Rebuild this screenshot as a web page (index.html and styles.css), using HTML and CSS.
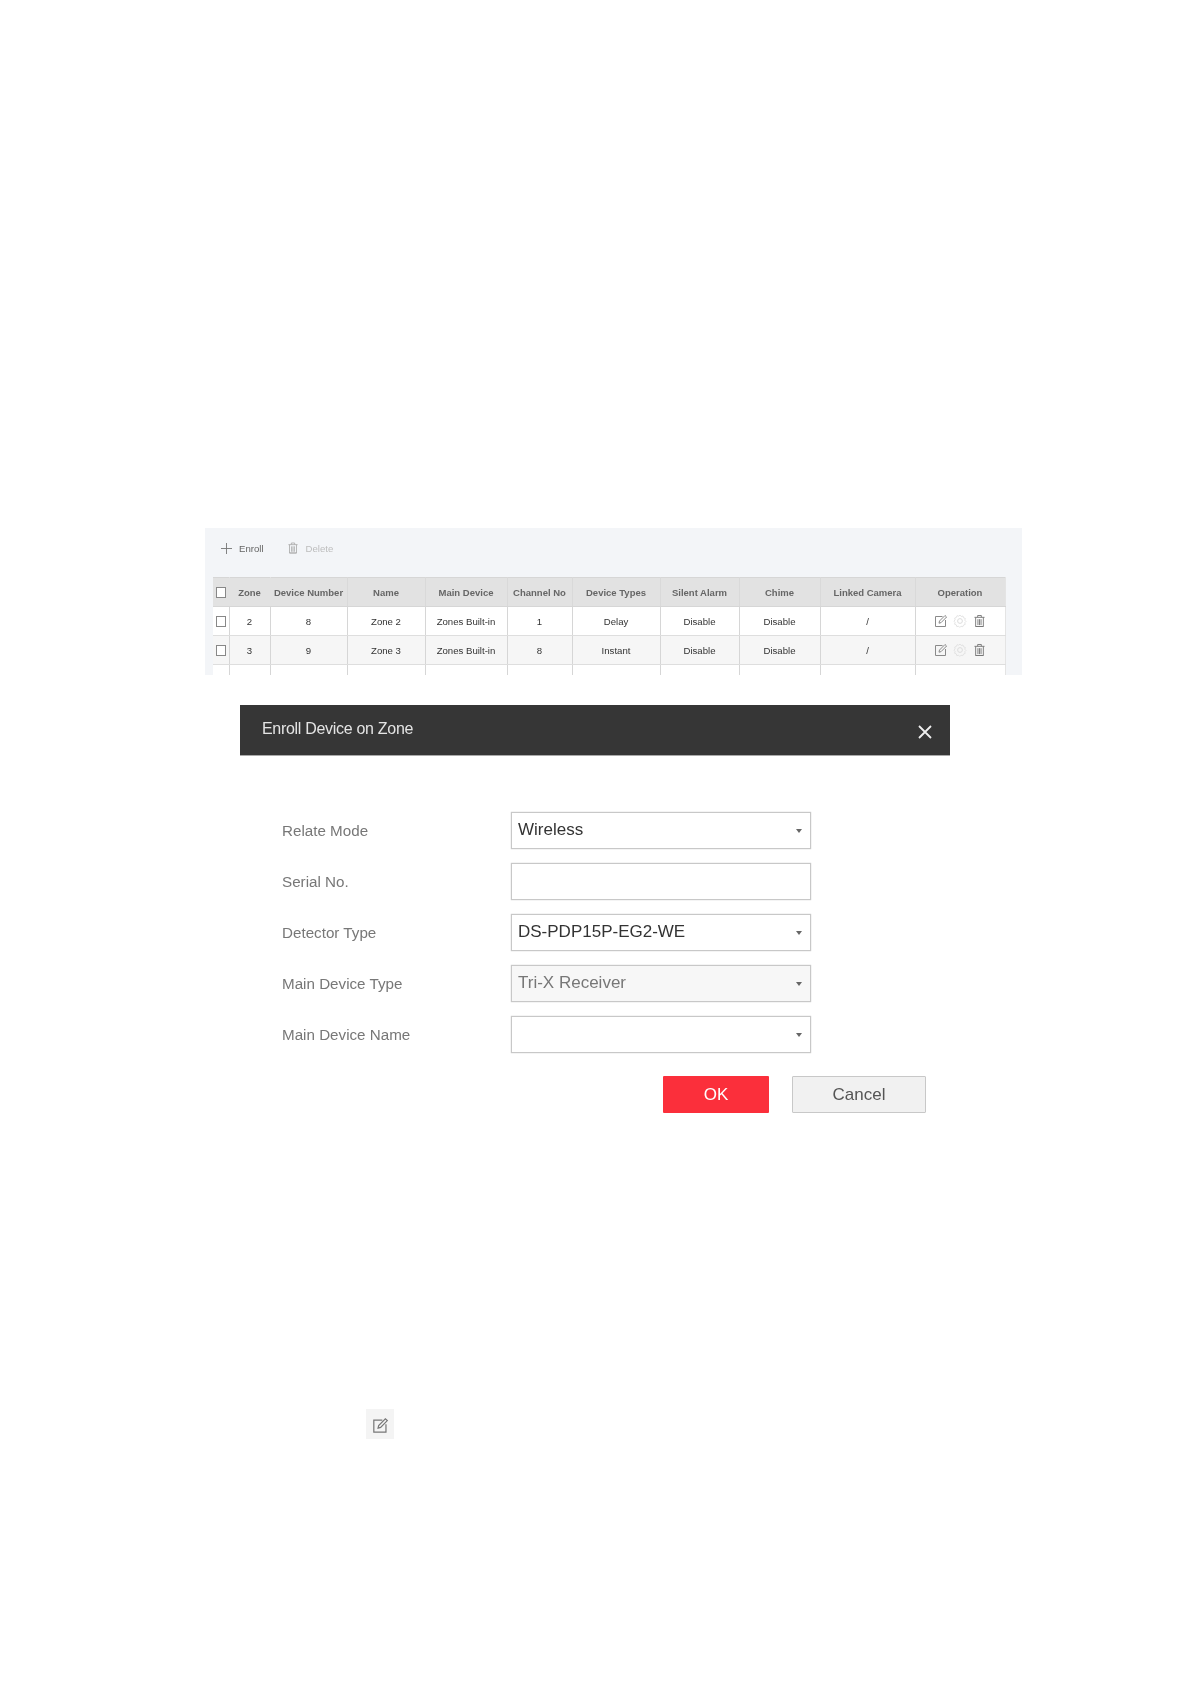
FILE: index.html
```html
<!DOCTYPE html>
<html lang="en">
<head>
<meta charset="utf-8">
<title>Enroll Device on Zone</title>
<link rel="stylesheet" href="styles.css">
</head>
<body>
<svg class="defs" width="0" height="0" aria-hidden="true">
  <symbol id="edit" viewBox="0 0 14 14"><path d="M8.5 2.5H1.5V12.5H11.5V6" fill="none" stroke="currentColor" stroke-width="1"/><path d="M5 9.2 5.5 7 11 1.5 12.6 3 7.1 8.6Z" fill="none" stroke="currentColor" stroke-width="1"/></symbol>
  <symbol id="gear" viewBox="0 0 14 14"><circle cx="7" cy="7" r="2.4" fill="none" stroke="currentColor"/><path d="M7 1 8.2 2.5 10 2 10.5 3.8 12.3 4.4 11.8 6.2 13 7.4 11.8 8.7 12.2 10.4 10.5 11 9.8 12.7 8 12.2 6.8 13.4 5.6 12.2 3.8 12.6 3.3 10.9 1.6 10.2 2.1 8.5 1 7.2 2.1 5.8 1.7 4 3.4 3.4 4 1.7 5.8 2.2Z" fill="none" stroke="currentColor" stroke-width=".8"/></symbol>
  <symbol id="trash" viewBox="0 0 12 14"><path d="M.5 3H11.5M4 3V1H8V3M1.8 3V13H10.2V3M4.3 5V11.5M6 5V11.5M7.7 5V11.5M1.8 13H10.2" fill="none" stroke="currentColor" stroke-width="1"/></symbol>
</svg>
<main class="page">
  <section class="panel">
    <div class="toolbar">
      <span class="tool"><svg class="plus" viewBox="0 0 12 12"><path d="M6 0V12M0 6H12" stroke="currentColor" fill="none"/></svg>Enroll</span>
      <span class="tool tool-off"><svg class="bin"><use href="#trash"/></svg>Delete</span>
    </div>
    <table class="grid">
      <colgroup>
        <col class="c1"><col class="c2"><col class="c3"><col class="c4"><col class="c5"><col class="c6"><col class="c7"><col class="c8"><col class="c9"><col class="c10"><col class="c11">
      </colgroup>
      <thead>
        <tr><th><span class="box"></span></th><th>Zone</th><th>Device Number</th><th>Name</th><th>Main Device</th><th>Channel No</th><th>Device Types</th><th>Silent Alarm</th><th>Chime</th><th>Linked Camera</th><th>Operation</th></tr>
      </thead>
      <tbody>
        <tr>
          <td><span class="box"></span></td><td>2</td><td>8</td><td>Zone 2</td><td>Zones Built-in</td><td>1</td><td>Delay</td><td>Disable</td><td>Disable</td><td>/</td>
          <td><span class="ops"><svg class="op"><use href="#edit"/></svg><svg class="op op-gear"><use href="#gear"/></svg><svg class="op op-trash"><use href="#trash"/></svg></span></td>
        </tr>
        <tr class="alt">
          <td><span class="box"></span></td><td>3</td><td>9</td><td>Zone 3</td><td>Zones Built-in</td><td>8</td><td>Instant</td><td>Disable</td><td>Disable</td><td>/</td>
          <td><span class="ops"><svg class="op"><use href="#edit"/></svg><svg class="op op-gear"><use href="#gear"/></svg><svg class="op op-trash"><use href="#trash"/></svg></span></td>
        </tr>
        <tr><td></td><td></td><td></td><td></td><td></td><td></td><td></td><td></td><td></td><td></td><td></td></tr>
      </tbody>
    </table>
  </section>

  <section class="dialog">
    <header class="dialog-head">
      <h2 class="dialog-title">Enroll Device on Zone</h2>
      <svg class="close" viewBox="0 0 14 14"><path d="M1 1 13 13M13 1 1 13" stroke="currentColor" stroke-width="1.8" fill="none"/></svg>
    </header>
    <form class="form">
      <div class="row"><label class="label">Relate Mode</label><div class="field">Wireless<i class="caret"></i></div></div>
      <div class="row"><label class="label">Serial No.</label><div class="field"></div></div>
      <div class="row"><label class="label">Detector Type</label><div class="field">DS-PDP15P-EG2-WE<i class="caret"></i></div></div>
      <div class="row"><label class="label">Main Device Type</label><div class="field field-off">Tri-X Receiver<i class="caret"></i></div></div>
      <div class="row"><label class="label">Main Device Name</label><div class="field"><i class="caret"></i></div></div>
    </form>
    <div class="actions">
      <span class="btn btn-ok">OK</span>
      <span class="btn btn-cancel">Cancel</span>
    </div>
  </section>

  <div class="edit-chip"><svg class="edit-icon"><use href="#edit"/></svg></div>
</main>
</body>
</html>
```

FILE: styles.css
```css
* { box-sizing: border-box; }
html, body { margin: 0; padding: 0; background: #fff; }
body { font-family: "Liberation Sans", Arial, sans-serif; }
.defs { display: block; height: 0; }
.page { display: flex; flex-direction: column; align-items: flex-start; padding-top: 528px; min-height: 1684px; }

.panel { margin-left: 205px; width: 817px; height: 147px; background: #f3f5f8; overflow: hidden; filter: blur(0.35px); }
.toolbar { height: 49px; padding: 6px 0 15px 16px; display: flex; align-items: center; gap: 24px; font-size: 9.6px; color: #666; }
.tool { display: flex; align-items: center; gap: 7px; }
.tool-off { color: #bdbdbd; gap: 8px; }
.plus { width: 11px; height: 11px; color: #777; }
.bin { width: 10px; height: 12px; color: #aaa; }

.grid { margin-left: 8px; width: 792px; border-collapse: collapse; table-layout: fixed; font-size: 9.6px; color: #333; }
.c1 { width: 16px; } .c2 { width: 41px; } .c3 { width: 77px; } .c4 { width: 78px; }
.c5 { width: 82px; } .c6 { width: 65px; } .c7 { width: 88px; } .c8 { width: 79px; }
.c9 { width: 81px; } .c10 { width: 95px; } .c11 { width: 90px; }
.grid th { height: 29px; padding: 0; background: #e2e2e2; border-top: 1px solid #d6d6d6; border-bottom: 1px solid #d6d6d6; border-right: 1px solid #d9d9d9; font-size: 9.5px; font-weight: bold; color: #666; text-align: center; }
.grid th:nth-child(-n+2) { border-right-color: #e2e2e2; }
.grid td { height: 29px; padding: 0; background: #fff; border-bottom: 1px solid #dedede; border-right: 1px solid #d6d6d6; text-align: center; }
.grid .alt td { background: #f6f6f6; }
.grid th:last-child, .grid td:last-child { border-right: 1px solid #e4e4e4; }
.box { display: block; width: 10px; height: 10.5px; margin: 1px 0 0 3px; background: #fff; border: 1px solid #888; }
.ops { display: flex; align-items: center; justify-content: flex-start; gap: 5px; padding-left: 18px; }
.op { width: 14px; height: 14px; color: #8a8a8a; }
.op-gear { color: #ddd; }
.op-trash { width: 11px; color: #777; margin-left: 2px; }

.dialog { margin: 30px 0 0 240px; width: 710px; filter: blur(0.25px); }
.dialog-head { height: 50px; padding: 0 18px 3px 22px; background: #363636; display: flex; align-items: center; justify-content: space-between; box-shadow: 0 1px 0 #aaa; }
.dialog-title { margin: 0; font-size: 16px; font-weight: normal; color: #e4e4e4; letter-spacing: -0.3px; }
.close { width: 14px; height: 14px; margin-top: 6px; color: #eee; }

.form { margin-top: 57px; display: flex; flex-direction: column; gap: 14px; }
.row { display: flex; align-items: center; height: 37px; }
.label { width: 271px; padding-left: 42px; font-size: 15.2px; color: #777; }
.field { position: relative; width: 300px; height: 37px; padding: 0 0 1px 6px; display: flex; align-items: center; background: #fff; border: 1px solid #c8c8c8; box-shadow: 0 0 1px #bbb; font-size: 17px; color: #333; }
.field-off { background: #f7f7f7; color: #777; }
.caret { position: absolute; right: 8px; top: 16px; width: 0; height: 0; border: 3.5px solid transparent; border-top: 4px solid #666; border-bottom: 0; }

.actions { margin-top: 23px; padding-right: 24px; display: flex; justify-content: flex-end; gap: 23px; }
.btn { height: 37px; display: flex; align-items: center; justify-content: center; font-size: 17px; border-radius: 1px; }
.btn-ok { width: 106px; background: #fb2f3b; color: #fff; }
.btn-cancel { width: 134px; background: #f1f1f1; border: 1px solid #c8c8c8; color: #555; }

.edit-chip { margin: 296px 0 0 366px; width: 28px; height: 30px; padding-top: 8px; background: #f4f4f4; display: flex; justify-content: center; align-items: flex-start; }
.edit-icon { width: 17px; height: 17px; color: #777; }
```
